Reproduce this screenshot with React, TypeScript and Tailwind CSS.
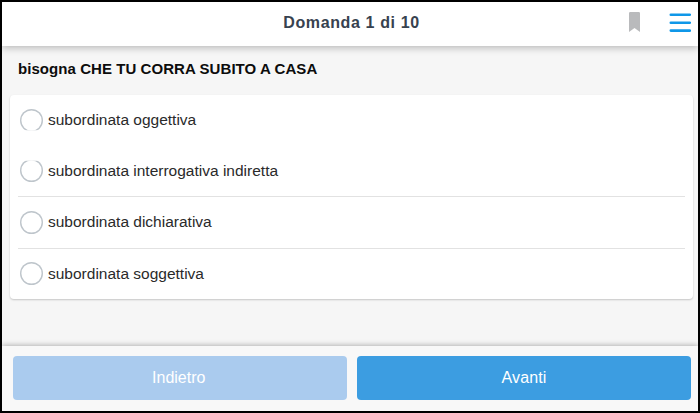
import { useState } from "react";
import clsx from "clsx";

interface Answer {
  id: number;
  text: string;
  ring: string;
  divider: boolean;
}

const answers: Answer[] = [
  { id: 1, text: "subordinata oggettiva", ring: "[clip-path:inset(0_0_1.4px_0)]", divider: false },
  { id: 2, text: "subordinata interrogativa indiretta", ring: "[clip-path:inset(1.4px_0_0_0)]", divider: true },
  { id: 3, text: "subordinata dichiarativa", ring: "", divider: true },
  { id: 4, text: "subordinata soggettiva", ring: "", divider: false },
];

export default function App() {
  const [selected, setSelected] = useState<number | null>(null);

  return (
    <div className="flex h-[413px] w-[700px] flex-col overflow-hidden border-2 border-black bg-[#f6f6f6] font-['Liberation_Sans',Arial,sans-serif]">
      <QuizHeader title="Domanda 1 di 10" />

      <main className="flex-1 px-2">
        <h2 className="flex h-[49px] items-center px-2 pb-[3px] text-[15px] font-bold tracking-[0.06px] text-[#0c0c0c]">
          <span className="whitespace-nowrap">bisogna CHE TU CORRA SUBITO A CASA</span>
        </h2>

        <div className="w-[683px] rounded-[4px] bg-white px-2 shadow-[0_1px_2px_rgba(0,0,0,0.2)]">
          {answers.map((answer) => (
            <button
              key={answer.id}
              type="button"
              role="radio"
              aria-checked={selected === answer.id}
              onClick={() => setSelected(answer.id)}
              className={clsx(
                "flex w-full cursor-pointer items-center gap-[5px] pl-[2px] text-left",
                answer.divider ? "h-[51.5px] border-b border-[#e2e2e2]" : "h-[50.5px]",
              )}
            >
              <span
                className={clsx(
                  "flex size-[23px] shrink-0 items-center justify-center rounded-full shadow-[inset_0_0_0_1.4px_#bec5cb]",
                  answer.ring,
                )}
              >
                {selected === answer.id && <span className="size-3 rounded-full bg-[#3b9de1]" />}
              </span>
              <span className="whitespace-nowrap pb-[0.6px] text-[15.5px] text-[#2a2a2a]">{answer.text}</span>
            </button>
          ))}
        </div>
      </main>

      <footer className="relative flex h-[65px] gap-[10px] bg-[#f8f8f8] pl-[10.5px] pr-[7px] pt-[10px] shadow-[0_-1px_5px_rgba(0,0,0,0.28)]">
        <button type="button" className="h-11 w-[334.5px] shrink-0 rounded-[4px] bg-[#aacbee] pr-[2px] text-base text-white">
          Indietro
        </button>
        <button type="button" className="h-11 w-[334px] shrink-0 cursor-pointer rounded-[4px] bg-[#3c9de1] text-base tracking-[0.1px] text-white">
          Avanti
        </button>
      </footer>
    </div>
  );
}

function QuizHeader({ title }: { title: string }) {
  return (
    <header className="relative flex h-11 shrink-0 items-center justify-center bg-white shadow-[0_2px_7px_rgba(0,0,0,0.25)]">
      <h1 className="pb-[2px] pl-[3px] text-base font-bold tracking-[0.62px] text-[#37424f]">{title}</h1>
      <div className="absolute right-[7px] top-[10px] flex items-start gap-[29px]">
        <button type="button" aria-label="Segnalibro" className="cursor-pointer">
          <svg width="11" height="20" viewBox="0 0 11 20" className="block">
            <path d="M0 1.2Q0 0 1.2 0H9.8Q11 0 11 1.2V20L5.5 16L0 20Z" fill="#b9babc" />
          </svg>
        </button>
        <button type="button" aria-label="Menu" className="cursor-pointer">
          <svg width="22" height="20" viewBox="0 0 22 20" className="block">
            <path
              d="M1.8 2.7H20.8M1.8 10.7H20.8M1.8 18.6H20.8"
              stroke="#0f97e8"
              strokeWidth="2.6"
              strokeLinecap="round"
            />
          </svg>
        </button>
      </div>
    </header>
  );
}
